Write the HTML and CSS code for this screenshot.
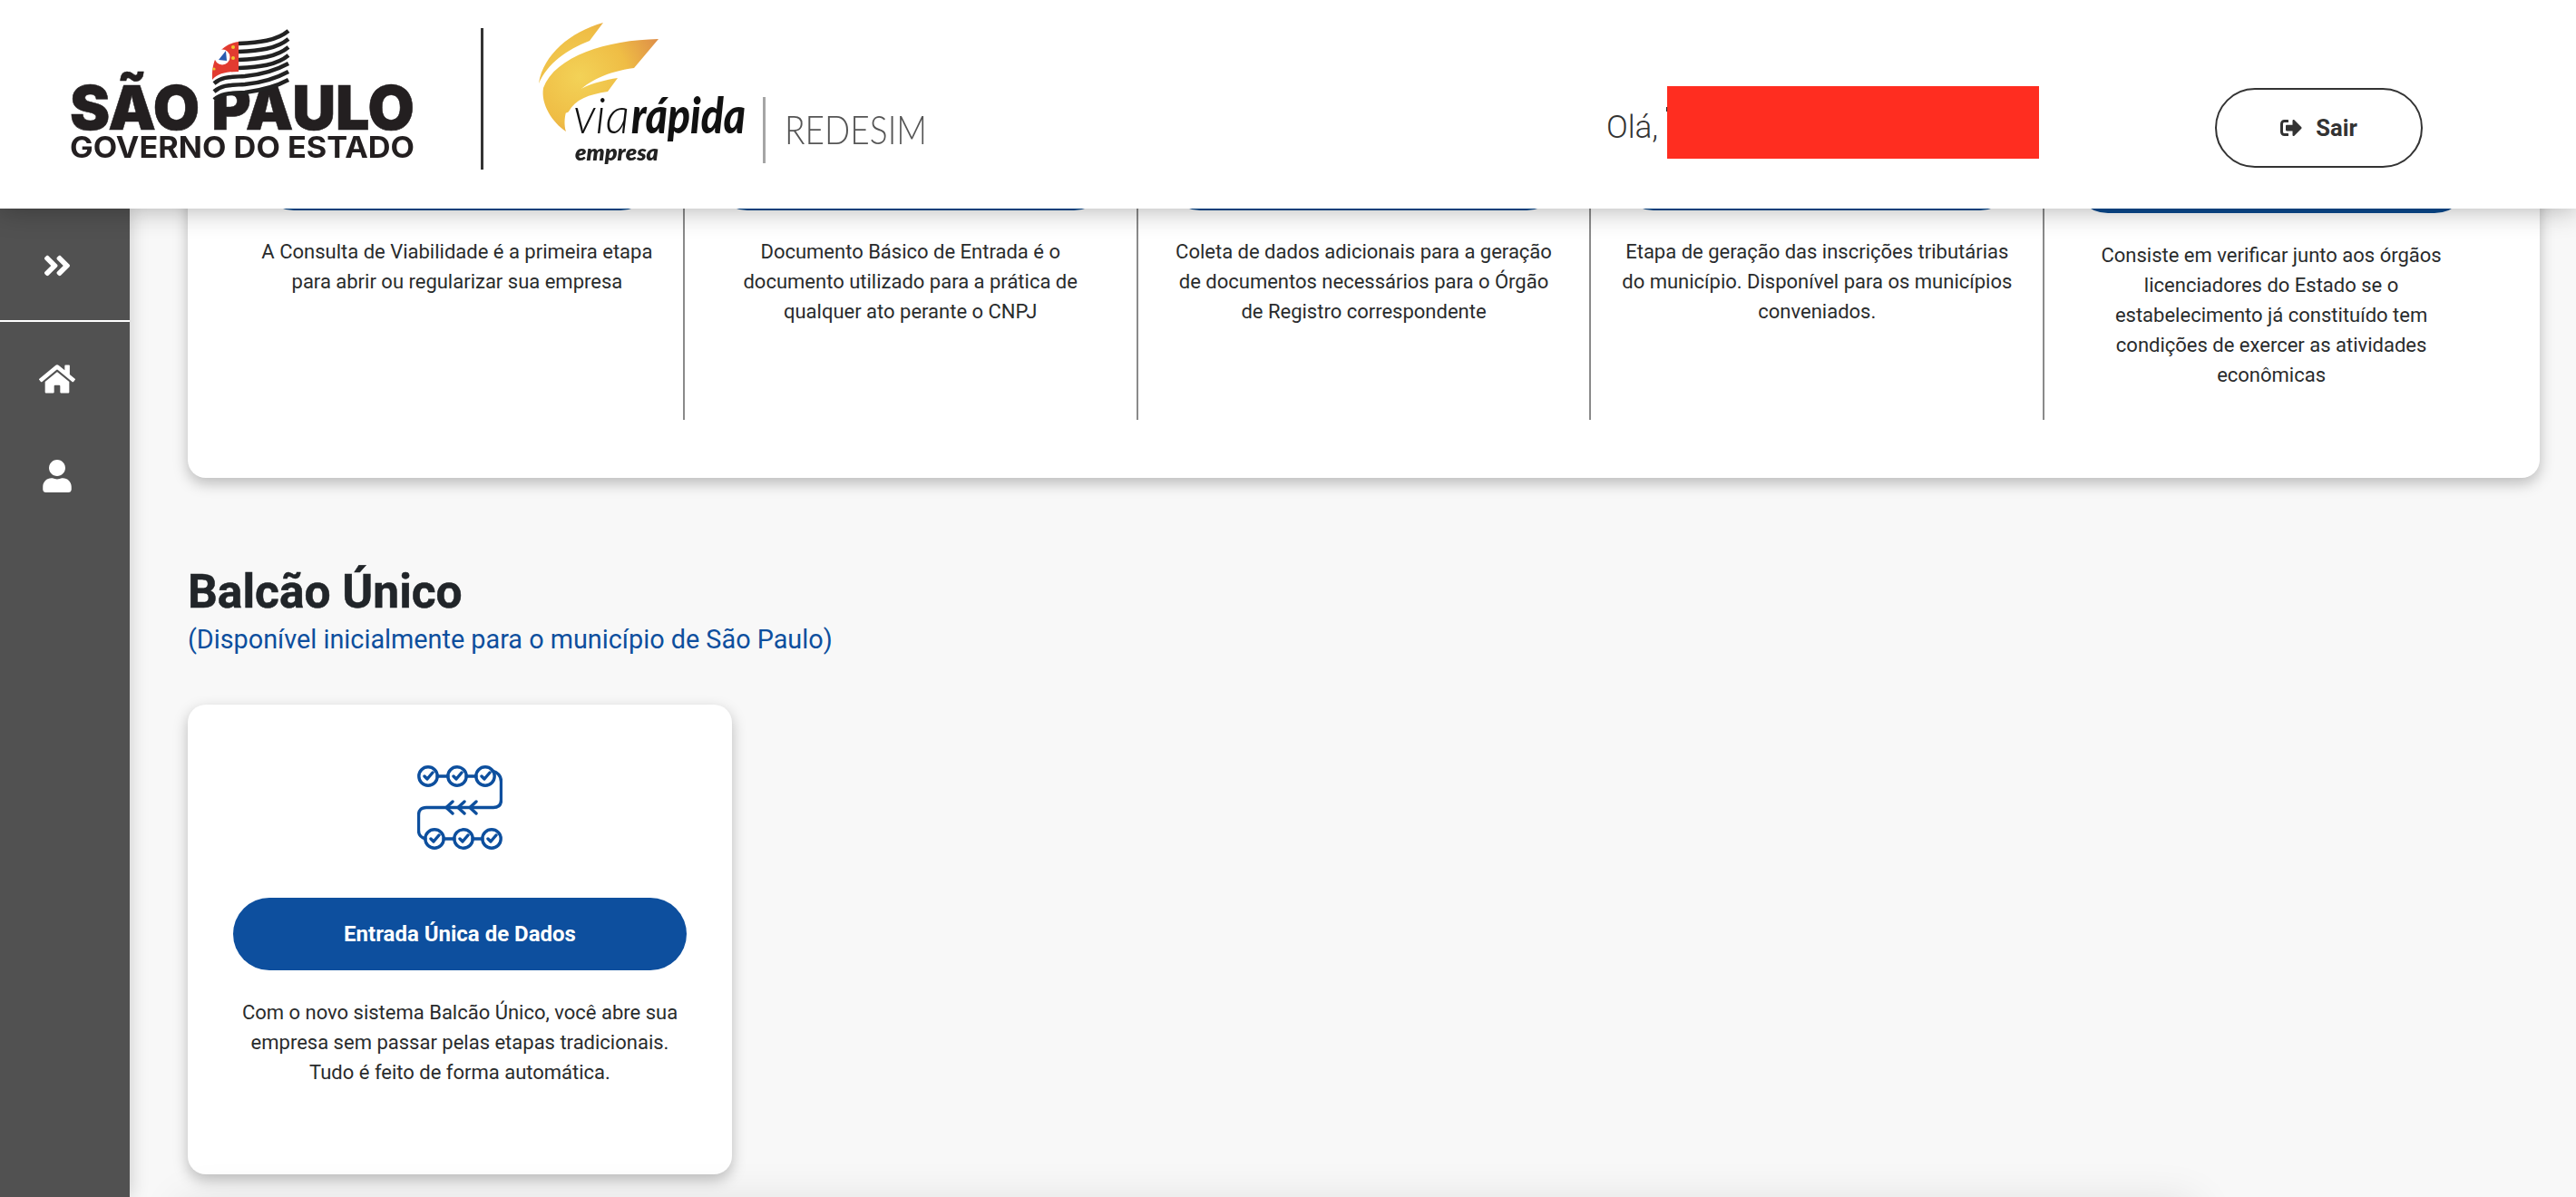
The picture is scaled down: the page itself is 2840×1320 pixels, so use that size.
FILE: index.html
```html
<!DOCTYPE html>
<html lang="pt-BR">
<head>
<meta charset="utf-8">
<title>Via Rápida Empresa</title>
<link rel="stylesheet" href="styles.css">
</head>
<body>
<header class="topbar">
  <svg class="logo-sp" viewBox="70 25 395 155" width="395" height="155" aria-label="São Paulo Governo do Estado">
    <text class="sp-main" x="77" y="143" textLength="380" lengthAdjust="spacingAndGlyphs">SÃO PAULO</text>
    <text class="sp-sub" x="77" y="174" textLength="380" lengthAdjust="spacingAndGlyphs">GOVERNO DO ESTADO</text>
    <path fill="#fff" d="M232 114V70C232 54 244 44 262 44L290 42 320 29V92L285 99 255 101 240 108Z"/>
    <g class="flag-stripes">
      <path d="M263 48C285 47 305 45 318 34"/>
      <path d="M263 57C285 56 305 54 318 43"/>
      <path d="M263 66C285 65 305 63 318 52"/>
      <path d="M263 75C285 74 305 72 318 61"/>
      <path d="M236 92C245 84 255 85 270 84C292 82 307 76 318 70"/>
      <path d="M236 101C245 93 255 94 270 93C292 91 307 85 318 79"/>
      <path d="M236 110C245 102 255 103 270 102C292 99 307 94 318 88"/>
    </g>
    <path fill="#e23b30" d="M234 88C233 64 243 49 263 46V79C250 79 240 81 234 88Z"/>
    <circle cx="245" cy="63" r="8.500" fill="#fff"/>
    <path fill="#2a5bb0" d="M241 66L249 56 250 67Z"/>
    <circle cx="257" cy="52" r="2" fill="#f2c230"/>
    <circle cx="257" cy="64" r="2" fill="#f2c230"/>
    <circle cx="236" cy="76" r="1.6" fill="#f2c230"/>
  </svg>
  <span class="logo-divider"></span>
  <svg class="logo-vr" viewBox="590 20 440 170" width="440" height="170" aria-label="Via Rápida Empresa Redesim">
    <defs>
      <radialGradient id="swoosh" gradientUnits="userSpaceOnUse" cx="640" cy="85" r="95">
        <stop offset="0" stop-color="#f3d257"/>
        <stop offset=".55" stop-color="#efbd45"/>
        <stop offset="1" stop-color="#de8f48"/>
      </radialGradient>
    </defs>
    <path fill="url(#swoosh)" d="M666 25C630 35 600 60 595 92 605 70 625 55 651 45Z"/>
    <path fill="url(#swoosh)" d="M727 43C670 44 613 62 600 97 597 115 610 135 625 145 618 117 640 83 700 75Z"/>
    <path fill="url(#swoosh)" d="M682 86C655 90 628 100 622 117 621 122 624 127 628 123 635 110 650 104 671 101Z"/>
    <text class="vr-via" x="633" y="147" textLength="62" lengthAdjust="spacingAndGlyphs">via</text>
    <text class="vr-rapida" x="697" y="147" textLength="126" lengthAdjust="spacingAndGlyphs">rápida</text>
    <text class="vr-empresa" x="635" y="177" textLength="92" lengthAdjust="spacingAndGlyphs">empresa</text>
    <rect x="842" y="107" width="3" height="73" fill="#a5a5a5"/>
    <text class="vr-redesim" x="866" y="159" textLength="157" lengthAdjust="spacingAndGlyphs">REDESIM</text>
  </svg>
  <div class="greeting">
    <span class="greeting-text">Olá,</span>
    <span class="greeting-name"></span>
  </div>
  <button class="logout" type="button">
    <svg class="logout-icon" viewBox="0 0 512 512" width="24" height="24"><path d="M497 273L329 441c-15 15-41 4.5-41-17v-96H152c-13.3 0-24-10.7-24-24v-96c0-13.3 10.7-24 24-24h136V88c0-21.4 25.9-32 41-17l168 168c9.3 9.4 9.3 24.6 0 34zM192 436v-40c0-6.6-5.4-12-12-12H96c-17.7 0-32-14.3-32-32V160c0-17.7 14.3-32 32-32h84c6.6 0 12-5.4 12-12V76c0-6.6-5.4-12-12-12H96c-53 0-96 43-96 96v192c0 53 43 96 96 96h84c6.6 0 12-5.4 12-12z"/></svg>
    <span>Sair</span>
  </button>
</header>

<div class="shell">
  <nav class="sidebar">
    <div class="side-toggle">
      <svg viewBox="0 0 448 512" width="32" height="36"><path d="M224.3 273l-136 136c-9.4 9.4-24.6 9.4-33.9 0l-22.6-22.6c-9.4-9.4-9.4-24.6 0-33.9l96.4-96.4-96.4-96.4c-9.4-9.4-9.4-24.6 0-33.9L54.3 103c9.4-9.4 24.6-9.4 33.9 0l136 136c9.5 9.4 9.5 24.6.1 34zm192-34l-136-136c-9.4-9.4-24.6-9.4-33.9 0l-22.6 22.6c-9.4 9.4-9.4 24.6 0 33.9l96.4 96.4-96.4 96.4c-9.4 9.4-9.4 24.6 0 33.9l22.6 22.6c9.4 9.4 24.6 9.4 33.9 0l136-136c9.4-9.2 9.4-24.4 0-33.8z"/></svg>
    </div>
    <div class="side-links">
      <svg viewBox="0 0 576 512" width="40" height="36"><path d="M280.37 148.26L96 300.11V464a16 16 0 0 0 16 16l112.06-.29a16 16 0 0 0 15.92-16V368a16 16 0 0 1 16-16h64a16 16 0 0 1 16 16v95.64a16 16 0 0 0 16 16.05L464 480a16 16 0 0 0 16-16V300L295.67 148.26a12.19 12.19 0 0 0-15.3 0zM571.6 251.47L488 182.56V44.05a12 12 0 0 0-12-12h-56a12 12 0 0 0-12 12v72.61L318.47 43a48 48 0 0 0-61 0L4.34 251.47a12 12 0 0 0-1.6 16.9l25.5 31A12 12 0 0 0 45.15 301l235.22-193.74a12.19 12.19 0 0 1 15.3 0L530.9 301a12 12 0 0 0 16.9-1.6l25.5-31a12 12 0 0 0-1.7-17z"/></svg>
      <svg viewBox="0 0 448 512" width="32" height="36"><path d="M224 256c70.7 0 128-57.3 128-128S294.7 0 224 0 96 57.3 96 128s57.3 128 128 128zm89.6 32h-16.7c-22.2 10.2-46.9 16-72.9 16s-50.6-5.8-72.9-16h-16.7C60.2 288 0 348.2 0 422.4V464c0 26.5 21.5 48 48 48h352c26.5 0 48-21.5 48-48v-41.6c0-74.2-60.2-134.4-134.4-134.4z"/></svg>
    </div>
  </nav>

  <main class="content">
    <section class="steps">
      <article class="step">
        <a class="pill step-pill"></a>
        <p class="step-text">A Consulta de Viabilidade é a primeira etapa para abrir ou regularizar sua empresa</p>
      </article>
      <article class="step">
        <a class="pill step-pill"></a>
        <p class="step-text">Documento Básico de Entrada é o documento utilizado para a prática de qualquer ato perante o CNPJ</p>
      </article>
      <article class="step">
        <a class="pill step-pill"></a>
        <p class="step-text">Coleta de dados adicionais para a geração de documentos necessários para o Órgão<br>de Registro correspondente</p>
      </article>
      <article class="step">
        <a class="pill step-pill"></a>
        <p class="step-text">Etapa de geração das inscrições tributárias do município. Disponível para os municípios conveniados.</p>
      </article>
      <article class="step step-last">
        <a class="pill step-pill"></a>
        <p class="step-text">Consiste em verificar junto aos órgãos licenciadores do Estado se o estabelecimento já constituído tem condições de exercer as atividades econômicas</p>
      </article>
    </section>

    <h2 class="section-title">Balcão Único</h2>
    <p class="section-sub">(Disponível inicialmente para o município de São Paulo)</p>

    <article class="single-card">
      <svg class="flow-icon" viewBox="0 0 94 93" width="94" height="93" aria-hidden="true">
        <g class="flow-lines">
          <circle cx="12" cy="12" r="10.200"/><circle cx="44" cy="12" r="10.200"/><circle cx="75" cy="12" r="10.200"/>
          <circle cx="19" cy="81" r="10.200"/><circle cx="51" cy="81" r="10.200"/><circle cx="82" cy="81" r="10.200"/>
          <path d="M22 12H34M54 12H65M29 81H41M61 81H72"/>
          <path d="M83 6Q92.500 9 92.500 18V38Q92.500 46.500 84 46.500H10Q1.500 46.500 1.500 55V72Q1.500 79 9 81"/>
          <path d="M39 40L32 46.500 39 53M52 40L45 46.500 52 53M65 40L58 46.500 65 53"/>
          <path d="M8 12L11 15 17 8M40 12L43 15 49 8M71 12L74 15 80 8M15 81L18 84 24 77M47 81L50 84 56 77M78 81L81 84 87 77"/>
        </g>
      </svg>
      <a class="pill single-pill">Entrada Única de Dados</a>
      <p class="single-text">Com o novo sistema Balcão Único, você abre sua empresa sem passar pelas etapas tradicionais. Tudo é feito de forma automática.</p>
    </article>
  </main>
</div>
</body>
</html>
```
FILE: styles.css
```css
* { box-sizing: border-box; }
html, body { margin: 0; height: 100%; }
body {
  position: relative;
  width: 2840px;
  height: 1320px;
  overflow: hidden;
  background: #f8f8f8;
  color: #292b2c;
  font-family: Roboto, "Liberation Sans", sans-serif;
}
/* faint shadow of the next row, scrolled just below the fold */
body::after {
  content: "";
  position: absolute;
  top: 1328px;
  left: 200px;
  width: 2220px;
  height: 40px;
  box-shadow: 0 0 50px rgba(0, 0, 0, .12);
}

.topbar {
  position: relative;
  z-index: 5;
  display: flex;
  align-items: flex-start;
  height: 230px;
  background: #fff;
  box-shadow: 0 0 30px rgba(0, 0, 0, .32);
}
.logo-sp {
  flex: none;
  margin: 25px 0 0 70px;
  overflow: visible;
  filter: blur(.6px);
}
.logo-divider {
  flex: none;
  width: 3px;
  height: 156px;
  margin: 31px 0 0 65px;
  background: #333;
}
.logo-vr {
  flex: none;
  margin: 20px 0 0 56px;
  overflow: visible;
  filter: blur(.6px);
}
.sp-main { font: 900 68px Inter, sans-serif; fill: #231f20; stroke: #231f20; stroke-width: .6px; }
.sp-sub { font: 700 32px Inter, sans-serif; fill: #231f20; }
.flag-stripes path { fill: none; stroke: #222; stroke-width: 4.4px; }
.vr-via { font: italic 300 56px Lato, sans-serif; fill: #111; }
.vr-rapida { font: italic 900 56px Lato, sans-serif; fill: #111; }
.vr-empresa { font: italic 800 25px Lato, sans-serif; fill: #222; }
.vr-redesim { font: 300 44px Lato, sans-serif; fill: #555; }

.greeting {
  position: relative;
  flex: none;
  display: flex;
  align-items: center;
  width: 477px;
  height: 229px;
  margin-left: 742px;
  padding-top: 52px;
}
.greeting-text { font-size: 35px; font-weight: 300; color: #333; }
.greeting-name {
  position: absolute;
  top: 95px;
  left: 67px;
  width: 410px;
  height: 80px;
  background: #ff2d20;
}
.greeting-name::before {
  content: "";
  position: absolute;
  top: 23px;
  left: -1px;
  width: 1px;
  height: 5px;
  background: #222;
}

.logout {
  flex: none;
  display: flex;
  align-items: center;
  justify-content: center;
  gap: 15px;
  width: 229px;
  height: 88px;
  margin: 97px 0 0 194px;
  padding: 0;
  background: #fff;
  border: 2px solid #333;
  border-radius: 44px;
  color: #333;
  font: 700 25.6px Roboto, sans-serif;
}
.logout-icon { fill: #333; }

.shell {
  display: flex;
  height: 1090px;
}
.sidebar {
  position: relative;
  z-index: 2;
  flex: none;
  width: 143px;
  background: #515151;
  box-shadow: 0 0 20px rgba(0, 0, 0, .2);
}
.sidebar svg { display: block; fill: #fff; }
.side-toggle {
  display: flex;
  justify-content: center;
  align-items: center;
  height: 125px;
  padding: 3px 17px 0 0;
  border-bottom: 2px solid #fff;
}
.side-links {
  display: flex;
  flex-direction: column;
  align-items: center;
  gap: 71px;
  padding: 45px 17px 0 0;
}

.content {
  flex: 1;
  min-width: 0;
  padding: 0 40px 0 64px;
}

.steps {
  display: grid;
  grid-template-columns: repeat(5, minmax(0, 1fr));
  height: 378px;
  margin-top: -81px;
  padding: 0 46px 0 48px;
  background: #fff;
  border-radius: 0 0 20px 20px;
  box-shadow: 0 6px 16px rgba(0, 0, 0, .25);
}
.step {
  display: flex;
  flex-direction: column;
  align-items: center;
  height: 314px;
  border-right: 2px solid #8a8a8a;
}
.step-last { border-right: 0; }
.pill {
  display: flex;
  align-items: center;
  justify-content: center;
  flex: none;
  height: 80px;
  background: #0d4f9e;
  border-radius: 40px;
  color: #fff;
  font-weight: 700;
  font-size: 24px;
}
.step-pill { width: 440px; margin-top: 3px; background: #0a4a90; }
.step-last .step-pill { margin-top: 6px; }
.step-text {
  width: 440px;
  margin: 29px 0 0;
  text-align: center;
  font-size: 22px;
  line-height: 33px;
}
.step-last .step-text { margin-top: 30px; }

.section-title {
  margin: 95px 0 0;
  font-size: 51.5px;
  line-height: 62px;
  font-weight: 700;
  color: #212529;
  -webkit-text-stroke: .5px #212529;
}
.section-sub {
  margin: 0;
  font-size: 28.8px;
  line-height: 42px;
  color: #0d4f9e;
}

.single-card {
  display: flex;
  flex-direction: column;
  align-items: center;
  width: 600px;
  height: 518px;
  margin-top: 51px;
  padding-top: 67px;
  background: #fff;
  border-radius: 20px;
  box-shadow: 0 6px 16px rgba(0, 0, 0, .25);
}
.flow-icon { display: block; flex: none; }
.flow-lines * { fill: none; stroke: #0d4f9e; stroke-width: 3.4px; stroke-linecap: round; stroke-linejoin: round; }
.single-pill { width: 500px; margin-top: 53px; }
.single-text {
  width: 490px;
  margin: 30px 0 0;
  text-align: center;
  font-size: 22px;
  line-height: 33px;
}
```
